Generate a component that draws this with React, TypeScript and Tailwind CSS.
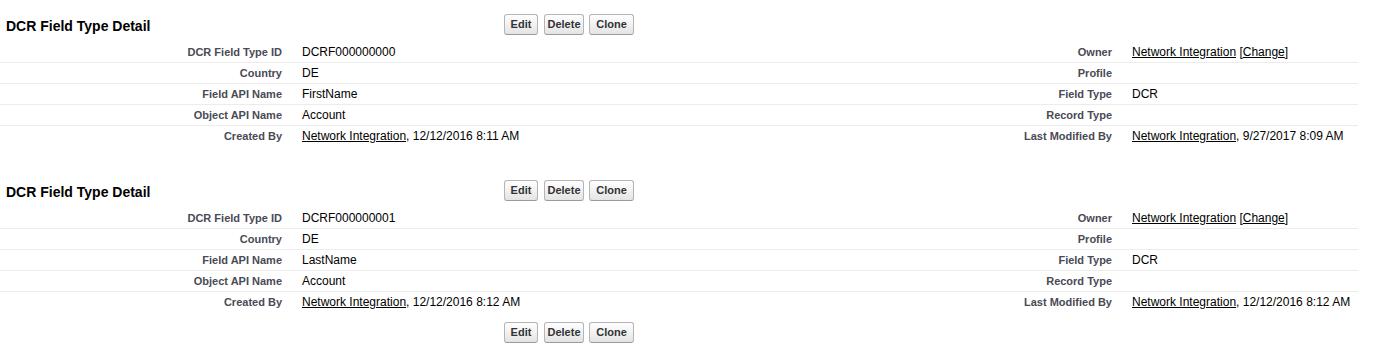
import React from "react";

type Cell = React.ReactNode;

function Link({ children }: { children: React.ReactNode }) {
  return <span className="underline text-black">{children}</span>;
}

function Btn({ label, w, ml }: { label: string; w: string; ml: string }) {
  return (
    <div
      className={`${w} ${ml} h-[21px] flex items-center justify-center rounded-[3px] border border-[#b5b5b5] border-b-[#9a9a9a] bg-gradient-to-b from-white to-[#e4e4e4] text-[11px] font-bold leading-[13px] text-[#333]`}
    >
      {label}
    </div>
  );
}

function Buttons() {
  return (
    <div className="flex">
      <Btn label="Edit" w="w-[34px]" ml="ml-0" />
      <Btn label="Delete" w="w-[40px]" ml="ml-[6px]" />
      <Btn label="Clone" w="w-[45px]" ml="ml-[5px]" />
    </div>
  );
}

function Row({ l1, v1, l2, v2, last }: { l1: string; v1: Cell; l2: string; v2: Cell; last?: boolean }) {
  return (
    <div
      className={`grid grid-cols-[292px_538px_292px_236px] ${
        last ? "h-[20px]" : "h-[21px] border-b border-[#ececec]"
      }`}
    >
      <div className="pt-[3px] pr-[10px] text-right text-[11px] font-bold leading-[15px] text-[#4a4a56] whitespace-nowrap">{l1}</div>
      <div className="pt-[3px] pl-[10px] text-[12px] leading-[15px] text-black whitespace-nowrap">{v1}</div>
      <div className="pt-[3px] pr-[10px] text-right text-[11px] font-bold leading-[15px] text-[#4a4a56] whitespace-nowrap">{l2}</div>
      <div className="pt-[3px] pl-[10px] text-[12px] leading-[15px] text-black whitespace-nowrap">{v2}</div>
    </div>
  );
}

function Section({
  id,
  apiName,
  created,
  modified,
  bottom,
  className,
}: {
  id: string;
  apiName: string;
  created: string;
  modified: string;
  bottom?: boolean;
  className?: string;
}) {
  return (
    <div className={className}>
      <div className="flex h-[21px] items-start">
        <div className="w-[504px] pl-[6px] pt-[4px] text-[14px] font-bold leading-[16px] text-black">
          DCR Field Type Detail
        </div>
        <Buttons />
      </div>
      <div className="mt-[7px] w-[1358px]">
        <Row
          l1="DCR Field Type ID"
          v1={id}
          l2="Owner"
          v2={
            <>
              <Link>Network Integration</Link> [<Link>Change</Link>]
            </>
          }
        />
        <Row l1="Country" v1="DE" l2="Profile" v2="" />
        <Row l1="Field API Name" v1={apiName} l2="Field Type" v2="DCR" />
        <Row l1="Object API Name" v1="Account" l2="Record Type" v2="" />
        <Row
          last
          l1="Created By"
          v1={
            <>
              <Link>Network Integration</Link>, {created}
            </>
          }
          l2="Last Modified By"
          v2={
            <>
              <Link>Network Integration</Link>, {modified}
            </>
          }
        />
      </div>
      {bottom && (
        <div className="mt-[10px] pl-[504px]">
          <Buttons />
        </div>
      )}
    </div>
  );
}

export default function App() {
  return (
    <div
      className="w-[1378px] h-[358px] bg-white pt-[14px] overflow-hidden"
      style={{ fontFamily: '"Liberation Sans", Arial, sans-serif' }}
    >
      <Section id="DCRF000000000" apiName="FirstName" created="12/12/2016 8:11 AM" modified="9/27/2017 8:09 AM" />
      <Section
        className="mt-[34px]"
        id="DCRF000000001"
        apiName="LastName"
        created="12/12/2016 8:12 AM"
        modified="12/12/2016 8:12 AM"
        bottom
      />
    </div>
  );
}
